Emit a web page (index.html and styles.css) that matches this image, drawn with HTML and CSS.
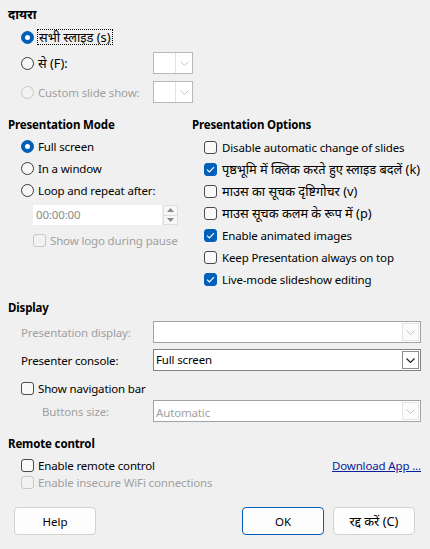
FILE: index.html
```html
<!DOCTYPE html>
<html>
<head>
<meta charset="utf-8">
<link rel="stylesheet" href="styles.css">
</head>
<body>
<div class="dlg">
  <section class="scope">
    <h3 class="hd hi">दायरा</h3>
    <div class="row ind r1"><span class="radio on"></span><span class="focus hi">सभी स्लाइड (s)</span></div>
    <div class="row ind r2"><span class="radio"></span><span class="lbl hi">से (F):</span><span class="mini-dd"><span class="dd-btn"><svg width="9" height="5" viewBox="0 0 9 5"><path d="M0.5 0.5 L4.5 4.5 L8.5 0.5" fill="none" stroke="#c4c4c4" stroke-width="1"/></svg></span></span></div>
    <div class="row ind r3 dis"><span class="radio"></span><span class="lbl">Custom slide show:</span><span class="mini-dd"><span class="dd-btn"><svg width="9" height="5" viewBox="0 0 9 5"><path d="M0.5 0.5 L4.5 4.5 L8.5 0.5" fill="none" stroke="#c4c4c4" stroke-width="1"/></svg></span></span></div>
  </section>

  <div class="cols">
    <section class="mode">
      <h3 class="hd">Presentation Mode</h3>
      <div class="rows">
        <div class="row ind"><span class="radio on"></span><span>Full screen</span></div>
        <div class="row ind"><span class="radio"></span><span>In a window</span></div>
        <div class="row ind"><span class="radio"></span><span>Loop and repeat after:</span></div>
        <div class="time">
          <span class="time-field">00:00:00</span>
          <span class="spin">
            <svg width="7" height="4" viewBox="0 0 7 4"><path d="M0 4 L3.5 0 L7 4Z" fill="#8a8a8a"/></svg>
            <span class="spin-sep"></span>
            <svg width="7" height="4" viewBox="0 0 7 4"><path d="M0 0 L3.5 4 L7 0Z" fill="#8a8a8a"/></svg>
          </span>
        </div>
        <div class="row logo dis"><span class="check"></span><span>Show logo during pause</span></div>
      </div>
    </section>

    <section class="opts">
      <h3 class="hd">Presentation Options</h3>
      <div class="rows">
        <div class="row oind"><span class="check"></span><span>Disable automatic change of slides</span></div>
        <div class="row oind"><span class="check on"><svg width="9" height="7" viewBox="0 0 9 7"><path d="M1 3.6 L3.4 6 L8 1.2" fill="none" stroke="#fff" stroke-width="1.2"/></svg></span><span class="hi">पृष्ठभूमि में क्लिक करते हुए स्लाइड बदलें (k)</span></div>
        <div class="row oind"><span class="check"></span><span class="hi">माउस का सूचक दृष्टिगोचर (v)</span></div>
        <div class="row oind"><span class="check"></span><span class="hi">माउस सूचक कलम के रूप में (p)</span></div>
        <div class="row oind"><span class="check on"><svg width="9" height="7" viewBox="0 0 9 7"><path d="M1 3.6 L3.4 6 L8 1.2" fill="none" stroke="#fff" stroke-width="1.2"/></svg></span><span>Enable animated images</span></div>
        <div class="row oind"><span class="check"></span><span>Keep Presentation always on top</span></div>
        <div class="row oind"><span class="check on"><svg width="9" height="7" viewBox="0 0 9 7"><path d="M1 3.6 L3.4 6 L8 1.2" fill="none" stroke="#fff" stroke-width="1.2"/></svg></span><span>Live-mode slideshow editing</span></div>
      </div>
    </section>
  </div>

  <section class="display">
    <h3 class="hd">Display</h3>
    <div class="drow dis"><span class="dlbl">Presentation display:</span>
      <span class="dd"><span class="dd-val"></span><span class="dd-btn"><svg width="9" height="5" viewBox="0 0 9 5"><path d="M0.5 0.5 L4.5 4.5 L8.5 0.5" fill="none" stroke="#c4c4c4" stroke-width="1"/></svg></span></span>
    </div>
    <div class="drow act"><span class="dlbl">Presenter console:</span>
      <span class="dd"><span class="dd-val">Full screen</span><span class="dd-btn"><svg width="9" height="5" viewBox="0 0 9 5"><path d="M0.5 0.5 L4.5 4.5 L8.5 0.5" fill="none" stroke="#1a1a1a" stroke-width="1.1"/></svg></span></span>
    </div>
    <div class="row ind nav"><span class="check"></span><span>Show navigation bar</span></div>
    <div class="drow dis bsize"><span class="dlbl">Buttons size:</span>
      <span class="dd"><span class="dd-val">Automatic</span><span class="dd-btn"><svg width="9" height="5" viewBox="0 0 9 5"><path d="M0.5 0.5 L4.5 4.5 L8.5 0.5" fill="none" stroke="#c4c4c4" stroke-width="1"/></svg></span></span>
    </div>
  </section>

  <section class="remote">
    <h3 class="hd">Remote control</h3>
    <div class="row ind srow"><span class="check"></span><span>Enable remote control</span><a class="link">Download App ...</a></div>
    <div class="row ind srow dis"><span class="check"></span><span>Enable insecure WiFi connections</span></div>
  </section>

  <footer class="btns">
    <button class="btn">Help</button>
    <span class="spacer"></span>
    <button class="btn def">OK</button>
    <button class="btn hi">रद्द करें (C)</button>
  </footer>
</div>
</body>
</html>
```

FILE: styles.css
```css
* { box-sizing: border-box; margin: 0; padding: 0; }
html, body { background: #f0f0f0; }
body {
  font-family: "Segoe UI", "Noto Sans", "Open Sans", sans-serif;
  font-size: 11.5px;
  letter-spacing: -0.15px;
  color: #000;
  width: 430px;
  height: 549px;
  overflow: hidden;
}
.hi { font-size: 12.8px; letter-spacing: 0; }
.dlg { padding: 6px 9px 0 8px; }
.hd { font-weight: bold; font-size: 11.5px; line-height: 16px; height: 16px; }
.hd.hi { font-size: 12.8px; }

.row { display: flex; align-items: center; height: 22px; white-space: nowrap; }
.ind { padding-left: 13px; }
.oind { padding-left: 12px; }
.dis { color: #a0a0a0; }

.radio {
  flex: 0 0 13px; width: 13px; height: 13px; border-radius: 50%;
  border: 1px solid #3c3c3c; background: #f7f7f7; margin-right: 4px;
  display: flex; align-items: center; justify-content: center;
}
.radio.on { background: #005fb8; border-color: #005fb8; }
.radio.on::after { content: ""; width: 5px; height: 5px; border-radius: 50%; background: #fff; }
.dis .radio { border-color: #c6c6c6; background: #f3f3f3; }

.check {
  flex: 0 0 13px; width: 13px; height: 13px; border-radius: 3px;
  border: 1px solid #4a4a4a; background: #f9f9f9; margin-right: 5px;
  display: flex; align-items: center; justify-content: center;
}
.check.on { background: #005fb8; border-color: #005fb8; }
.dis .check { border-color: #c8c8c8; background: #f2f2f2; }

/* scope */
.r1 { margin-top: 4px; }
.r2 { margin-top: 4px; }
.r3 { margin-top: 7px; }
.focus { outline: 1px dotted #000; line-height: 14px; padding: 0 1px; }
.lbl { flex: 0 0 115px; }
.mini-dd {
  width: 40px; height: 22px; background: #fff; border: 1px solid #b8b8b8;
  display: flex; justify-content: flex-end; align-items: stretch;
}
.mini-dd .dd-btn { width: 17px; border-left: 1px solid #e2e2e2; }

.dd-btn { display: flex; align-items: center; justify-content: center; }

/* columns */
.cols { display: grid; grid-template-columns: 184px 1fr; margin-top: 14px; }
.rows { margin-top: 2px; }
.opts .rows { margin-top: 3px; }

.time { display: flex; margin: 4px 0 0 25px; height: 20px; }
.time-field {
  width: 129px; height: 20px; background: #fff; color: #8c8c8c;
  line-height: 20px; padding-left: 3px;
}
.spin {
  width: 15px; height: 20px; margin-left: 1px; background: #f7f7f7; border: 1px solid #dedede;
  display: flex; flex-direction: column; align-items: center; justify-content: space-evenly;
}
.spin-sep { width: 13px; height: 1px; background: #dedede; }
.logo { margin-top: 4px; padding-left: 25px; }
.logo .check { margin-right: 4px; }

/* display */
.display { margin-top: 10px; }
.drow { display: flex; align-items: center; height: 22px; padding-left: 13px; margin-top: 5px; }
.drow + .drow { margin-top: 6px; }
.dlbl { flex: 0 0 132px; }
.dd {
  flex: 1; height: 22px; background: #fff; border: 1px solid #8c9096;
  display: flex; align-items: stretch;
}
.dd-val { flex: 1; padding-left: 2px; line-height: 20px; }
.dd .dd-btn { width: 17px; margin: 1px; border: 1px solid #e4e4e4; background: #fbfbfb; }
.act .dd { border-color: #7d8289; }
.act .dd .dd-btn { border-color: #8a8a8a; background: #fff; }
.dis .dd { border-color: #9ea3a8; }
.nav { margin-top: 6px; }
.nav .check { margin-right: 4px; }
.drow.bsize { margin-top: 1px; padding-left: 34px; }
.bsize .dlbl { flex-basis: 111px; }
.bsize .dd-val { line-height: 24px; }

/* remote */
.remote { margin-top: 14px; }
.srow { height: 17px; }
.remote .srow:first-of-type { margin-top: 5px; }
.srow .check { margin-right: 4px; }
.link { margin-left: auto; color: #0b1d9a; text-decoration: underline; cursor: pointer; }

/* buttons */
.btns { display: flex; margin-top: 16px; padding: 0 6px 0 6px; gap: 9px; }
.spacer { flex: 1; }
.btn {
  width: 82px; height: 28px; font: inherit; color: #000;
  background: #fdfdfd; border: 1px solid #d2d2d2; border-radius: 4px;
}
.btn.hi { font-size: 12.8px; }
.btn.def { border-color: #005fb8; }
```
